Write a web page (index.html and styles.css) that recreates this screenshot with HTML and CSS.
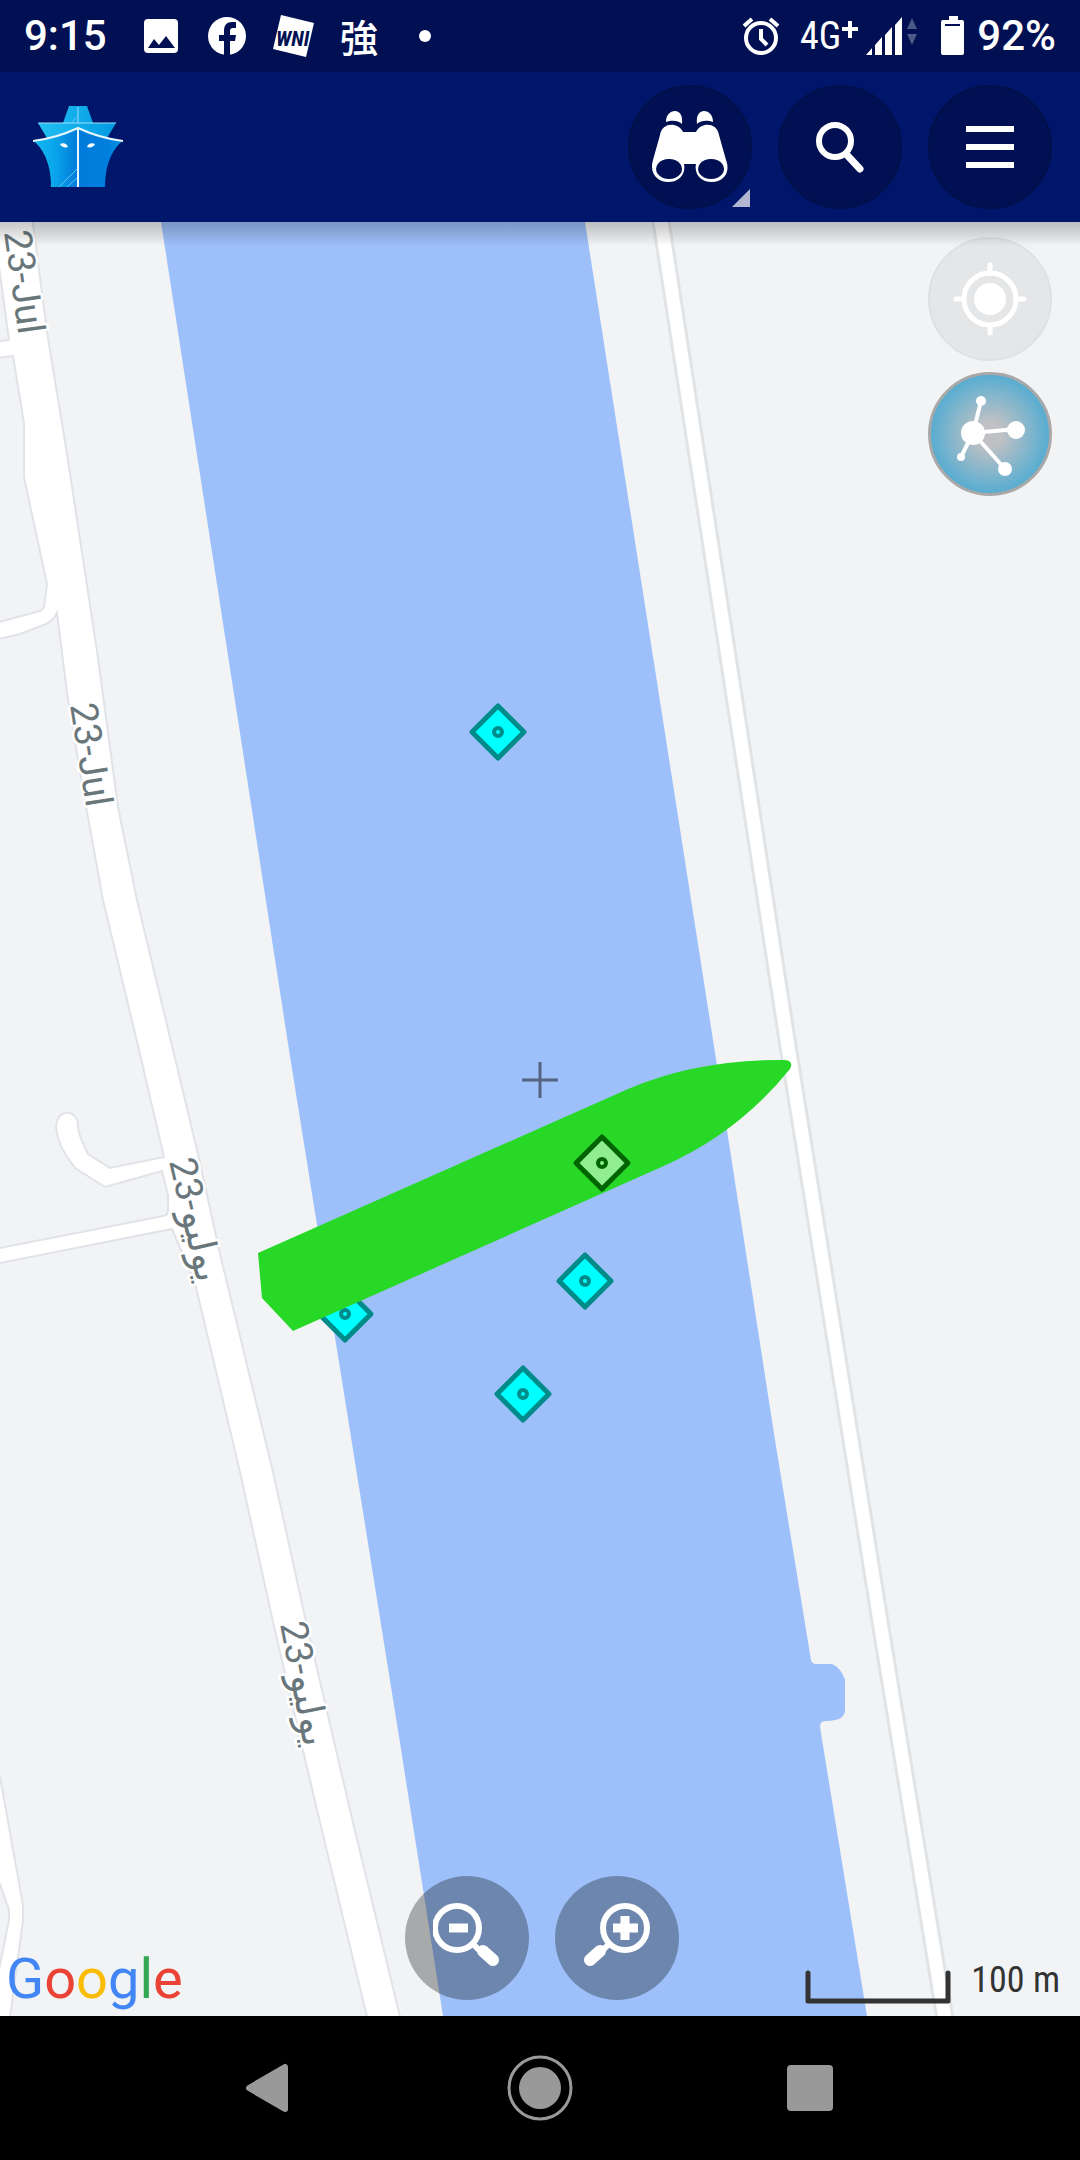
FILE: index.html
```html
<!DOCTYPE html>
<html lang="en">
<head>
<meta charset="utf-8">
<meta name="viewport" content="width=device-width, initial-scale=1">
<title>Ship map</title>
<link rel="stylesheet" href="styles.css">
</head>
<body>
<div class="screen">
  <div class="status">
    <span class="clock">9:15</span>
    <div class="notices">
      <svg width="38" height="44" viewBox="0 0 38 44"><path fill="#fff" fill-rule="evenodd" d="M6 5h26a4 4 0 0 1 4 4v26a4 4 0 0 1-4 4H6a4 4 0 0 1-4-4V9a4 4 0 0 1 4-4zM6 34h27l-9-12-7 9-5-6z"/></svg>
      <svg width="38" height="44" viewBox="0 0 38 44"><circle cx="19" cy="22" r="19" fill="#fff"/><path fill="#001052" d="M16 42V27h-5v-6h5v-4c0-6 3-9 8-9h4v6h-3c-2 0-3 1-3 3v4h6l-1 6h-5v15z"/></svg>
      <svg class="news" width="38" height="44" viewBox="2 0 38 44"><path fill="#fff" d="M9 1l33 8-8 34-33-8z"/><text class="wni" x="4" y="32">WNI</text></svg>
      <span class="kanji" lang="ja">強</span>
      <i class="dot"></i>
    </div>
    <div class="system">
      <svg width="38" height="44" viewBox="0 0 38 44" fill="none" stroke="#fff"><circle cx="19" cy="24" r="15" stroke-width="4"/><path stroke-width="4" d="M19 15v10l6 6M2 12l8-7M36 12l-8-7"/></svg>
      <span class="network">4G</span>
      <svg class="signal" width="80" height="44" viewBox="0 0 80 44"><path fill="#fff" d="M1 13h6V7h4v6h6v4h-6v7H7v-7H1zM25 41l6-7v7zM34 41V31l7-8v18zM44 41V21l7-8v28zM54 41V11l7-8v38z"/><path fill="#4c5888" d="M66 15l5-11 5 11zM66 20h10l-5 11z"/></svg>
      <svg width="24" height="44" viewBox="0 0 24 44"><path fill="#fff" fill-rule="evenodd" d="M8 2h9v4h4a2 2 0 0 1 2 2v31a2 2 0 0 1-2 2H2a2 2 0 0 1-2-2V8a2 2 0 0 1 2-2h6zM4 10v2h15v-2z"/></svg>
      <span class="percent">92%</span>
    </div>
  </div>

  <header class="appbar">
    <svg class="logo" width="90" height="82" viewBox="0 0 90 82">
      <defs>
        <linearGradient id="port" x1="0" x2="1"><stop offset="0" stop-color="#12b9ee"/><stop offset=".45" stop-color="#0aa6ec"/><stop offset="1" stop-color="#0079d8"/></linearGradient>
        <linearGradient id="star" x1="0" x2="1"><stop offset="0" stop-color="#007bdc"/><stop offset=".7" stop-color="#007fde"/><stop offset="1" stop-color="#0b96e6"/></linearGradient>
        <linearGradient id="deck" x1="0" x2="1"><stop offset="0" stop-color="#22c0f2"/><stop offset="1" stop-color="#0099e2"/></linearGradient>
      </defs>
      <path fill="url(#deck)" d="M36 0h18l6 17H30zM5 17h78l-9 15-29-9-31 9z"/>
      <path fill="url(#port)" d="M1 36l44-13v58H18C18 62 13 47 3 37z"/>
      <path fill="url(#star)" d="M89 36L45 23v58h27c0-19 5-34 15-44z"/>
      <path fill="none" stroke="#9fe0fb" d="M5 17h78M45 1v16"/>
      <path fill="none" stroke="#5cc4f4" d="M26 81l19-19M34 81l11-10M39 16l6-6"/>
      <path fill="none" stroke="#e6f8ff" stroke-width="2" d="M0 35c17-2 32-7 45-13 13 6 28 11 45 13M45 22v59"/>
      <path fill="#fff" d="M27 38c4-2 7 0 8 3-3 1-7 0-8-3zM62 38c-4-2-7 0-8 3 3 1 7 0 8-3z"/>
    </svg>
    <div class="tools">
      <button class="round dark" aria-label="Views">
        <svg width="76" height="72" viewBox="0 0 76 72"><path fill="#fff" d="M14 11C14 4 18 0 23 0s8 5 7 13c-4-4-11-4-16-2zM61 11C61 4 57 0 52 0s-8 5-7 13c4-4 11-4 16-2z"/><path fill="#fff" fill-rule="evenodd" d="M8 24c2-13 18-13 23-3h13c5-10 21-10 23 3l7 25c5 13-3 22-14 22-12 0-18-9-16-18H32c2 9-4 18-16 18C5 71-3 62 1 49zM17 48a13 10 0 1 0 .1 0zM59 48a13 10 0 1 0 .1 0z"/></svg>
        <svg class="corner" width="18" height="18" viewBox="0 0 18 18"><path fill="#b1b7d2" d="M18 0v18H0z"/></svg>
      </button>
      <button class="round dark" aria-label="Search">
        <svg width="50" height="52" viewBox="0 0 50 52" fill="none" stroke="#fff"><circle cx="20" cy="20" r="16" stroke-width="6"/><path stroke-width="7" stroke-linecap="round" d="M32 34l13 14"/></svg>
      </button>
      <button class="round dark" aria-label="Menu">
        <svg width="48" height="44" viewBox="0 0 48 44"><path fill="#fff" d="M0 1h48v6H0zM0 19h48v6H0zM0 37h48v6H0z"/></svg>
      </button>
    </div>
  </header>

  <main class="map">
    <svg class="chart" viewBox="0 222 1080 1794" preserveAspectRatio="xMidYMid slice">
      <defs>
        <g id="stop"><path d="M0-26L26 0 0 26-26 0z" stroke-width="5" stroke-linejoin="round"/><circle r="4" stroke-width="4"/></g>
      </defs>
      <path fill="#9dc0fa" d="M161 222L289 1050 400 1743 443 2016H867L820 1727q0-6 5-6c10 0 20-2 20-11V1680c-2-6-5-12-13-16H816q-4 0-5-4L775 1440 713 1040 585 222z"/>

      <path class="edge" d="M660 215L787 1040 883 1640 946 2025"/>
      <path class="lane" d="M660 215L787 1040 883 1640 946 2025"/>

      <path class="road" d="M31 210L48 338 67 454 97 651 118 807 137 900 173 1050 198 1154 220 1254 273 1472 305 1617 350 1810 402 2025H369L317 1810 273 1622 240 1472 195 1283 172 1229-5 1264V1249L163 1216q5 0 5-6V1195L162 1171 105 1187 75 1168C66 1157 58 1145 56 1128 56 1108 78 1108 78 1126 78 1135 83 1143 88 1154L110 1168 164 1157 139 1050 103 900 87 812 68 700 57 613Q54 620 46 624L20 634-5 640V623L40 611Q45 609 45 600L47 584 24 477V423L13 356-5 358V342L9 340-8 215z"/>
      <path class="road" d="M-4 1765L0 1777 23 1905V1920L9 2025H-5V1990L9 1920V1910L-5 1870z"/>

      <g class="names">
        <text transform="translate(4 232) rotate(82)">23-Jul</text>
        <text transform="translate(70 705) rotate(81)">23-Jul</text>
        <text transform="translate(169 1161) rotate(77)">23-يوليو</text>
        <text transform="translate(280 1624) rotate(79)">23-يوليو</text>
      </g>

      <path stroke="#536380" stroke-width="3" d="M522 1080h36M540 1062v36"/>
      <g fill="#0ff" stroke="#008b8b">
        <use href="#stop" x="498" y="732"/>
        <use href="#stop" x="585" y="1281"/>
        <use href="#stop" x="523" y="1394"/>
        <use href="#stop" x="345" y="1314"/>
      </g>
      <path fill="#27d827" d="M258 1253L628 1089Q698 1059 785 1060 794 1061 790 1069 739 1132 666 1165L293 1331 262 1298z"/>
      <g fill="#90ee90" stroke="#006400"><use href="#stop" x="602" y="1163"/></g>
    </svg>

    <div class="side">
      <button class="round pale" aria-label="My location">
        <svg width="74" height="74" viewBox="0 0 74 74" fill="none" stroke="#fff" stroke-width="5"><circle cx="37" cy="37" r="26"/><circle cx="37" cy="37" r="16" fill="#fff" stroke="none"/><path stroke-linecap="round" d="M37 3v8M37 63v8M3 37h8M63 37h8"/></svg>
      </button>
      <button class="round links" aria-label="Share">
        <svg width="74" height="84" viewBox="0 0 74 84" fill="#fff"><path stroke="#fff" stroke-width="4" d="M20 41L28 9M20 41l43-4M20 41l32 36M20 41L8 65"/><circle cx="20" cy="41" r="12"/><circle cx="28" cy="9" r="5"/><circle cx="63" cy="38" r="9"/><circle cx="52" cy="77" r="7"/><circle cx="8" cy="65" r="4"/></svg>
      </button>
    </div>

    <div class="zooms">
      <button class="round veil" aria-label="Zoom out">
        <svg width="68" height="64" viewBox="0 0 68 64" fill="none" stroke="#fff"><circle cx="24" cy="25" r="22" stroke-width="6"/><path stroke-width="9" d="M16 25h19"/><path stroke-width="6" d="M40 41l6 6"/><path stroke-width="12" stroke-linecap="round" d="M50 48l10 9"/></svg>
      </button>
      <button class="round veil" aria-label="Zoom in">
        <svg width="68" height="64" viewBox="0 0 68 64" fill="none" stroke="#fff"><circle cx="42" cy="25" r="22" stroke-width="6"/><path stroke-width="9" d="M30 25h25M42 13v24"/><path stroke-width="6" d="M26 41l-6 6"/><path stroke-width="12" stroke-linecap="round" d="M17 48L7 57"/></svg>
      </button>
    </div>

    <a class="google" href="#"><span class="b">G</span><span class="r">o</span><span class="y">o</span><span class="b">g</span><span class="g">l</span><span class="r">e</span></a>
    <div class="scale">
      <svg width="146" height="34" viewBox="0 0 146 34" fill="none" stroke="#333" stroke-width="5" stroke-linecap="round" stroke-linejoin="round"><path d="M3 3v28h140V3"/></svg>
      <span>100 m</span>
    </div>
  </main>

  <nav class="nav">
    <button aria-label="Back"><svg class="back" width="48" height="64" viewBox="0 0 48 64"><path fill="#999" stroke="#999" stroke-width="6" stroke-linejoin="round" d="M3 32l36-21v42z"/></svg></button>
    <button aria-label="Home"><svg width="66" height="66" viewBox="0 0 66 66"><circle cx="33" cy="33" r="21" fill="#999"/><circle cx="33" cy="33" r="31" fill="none" stroke="#999" stroke-width="3"/></svg></button>
    <button aria-label="Recent apps"><svg width="46" height="46" viewBox="0 0 46 46"><rect width="46" height="46" rx="4" fill="#999"/></svg></button>
  </nav>
</div>
</body>
</html>
```
FILE: styles.css
```css
* { box-sizing: border-box; }
body { margin: 0; font-family: Roboto, "Noto Sans", sans-serif; }
svg { display: block; flex: none; }
button { border: 0; padding: 0; background: none; cursor: pointer; }

.screen { display: flex; flex-direction: column; min-height: 100vh; }

.status {
  display: flex; justify-content: space-between; align-items: center;
  height: 72px; padding: 0 24px; background: #001052; color: #fff;
}
.clock { width: 118px; font-size: 42px; font-weight: 500; line-height: 72px; }
.notices { display: flex; align-items: center; gap: 28px; flex: 1; }
.news { overflow: visible; }
.kanji { font: 500 38px/44px "Noto Sans CJK JP", sans-serif; }
.dot { width: 12px; height: 12px; margin-left: 13px; border-radius: 50%; background: #fff; }
.wni { font: italic 700 21px "Roboto Condensed", Roboto, sans-serif; fill: #001052; }
.system { display: flex; align-items: center; }
.network { margin-left: 20px; font: 400 38px/44px "Roboto Condensed", "Liberation Sans Narrow", Roboto, sans-serif; }
.signal { margin-right: 20px; }
.percent { margin-left: 12px; font-size: 42px; font-weight: 500; line-height: 72px; }

.appbar {
  display: flex; justify-content: space-between; align-items: center;
  height: 150px; padding: 0 28px 0 33px; background: #00166a;
}
.tools { display: flex; gap: 26px; }
.round {
  position: relative; display: grid; place-items: center;
  width: 124px; height: 124px; border-radius: 50%;
}
.dark { background: #001052; border: 2px solid #00104b; }
.corner { position: absolute; right: 0; bottom: 0; }

.map { position: relative; flex: 1; overflow: hidden; background: #f1f3f5; }
.map::after {
  content: ""; position: absolute; inset: 0 0 auto; height: 24px;
  background: linear-gradient(rgba(0, 0, 0, .22), rgba(0, 0, 0, .14) 40%, transparent);
  pointer-events: none;
}
.chart { position: absolute; inset: 0; width: 100%; height: 100%; }
.edge { fill: none; stroke: #e1e4e7; stroke-width: 19px; }
.lane { fill: none; stroke: #fff; stroke-width: 13px; }
.road { fill: #fff; stroke: #e1e3e8; stroke-width: 2px; }
.names {
  font: 400 38px Roboto, "DejaVu Sans", sans-serif;
  fill: #69777c; stroke: #fff; stroke-width: 5px; stroke-linejoin: round; paint-order: stroke;
}

.side { position: absolute; top: 15px; right: 28px; display: grid; gap: 11px; }
.pale { background: #e5e6e8; border: 2px solid #dfe0e2; }
.links { background: radial-gradient(closest-side, #c0c1c4 20%, #58add1); border: 3px solid #a8a8a8; }
.zooms {
  position: absolute; left: 0; right: 0; bottom: 16px; padding-left: 4px;
  display: flex; justify-content: center; gap: 26px;
}
.veil { background: rgba(0, 0, 0, .3); padding-bottom: 6px; }

.google {
  position: absolute; left: 6px; bottom: 4px; text-decoration: none;
  font: 400 56px/66px Roboto, sans-serif;
}
.b { color: #4285f4; }
.r { color: #ea4335; }
.y { color: #fbbc05; }
.g { color: #34a853; }
.scale {
  position: absolute; right: 20px; bottom: 12px; display: flex; align-items: flex-end; gap: 20px;
  font: 400 36px/48px "Roboto Condensed", "Liberation Sans Narrow", Roboto, sans-serif; color: #333;
}

.nav {
  display: grid; grid-template-columns: repeat(3, 1fr);
  height: 144px; padding: 0 12.5%; background: #000;
}
.nav button { display: grid; place-items: center; }
```
